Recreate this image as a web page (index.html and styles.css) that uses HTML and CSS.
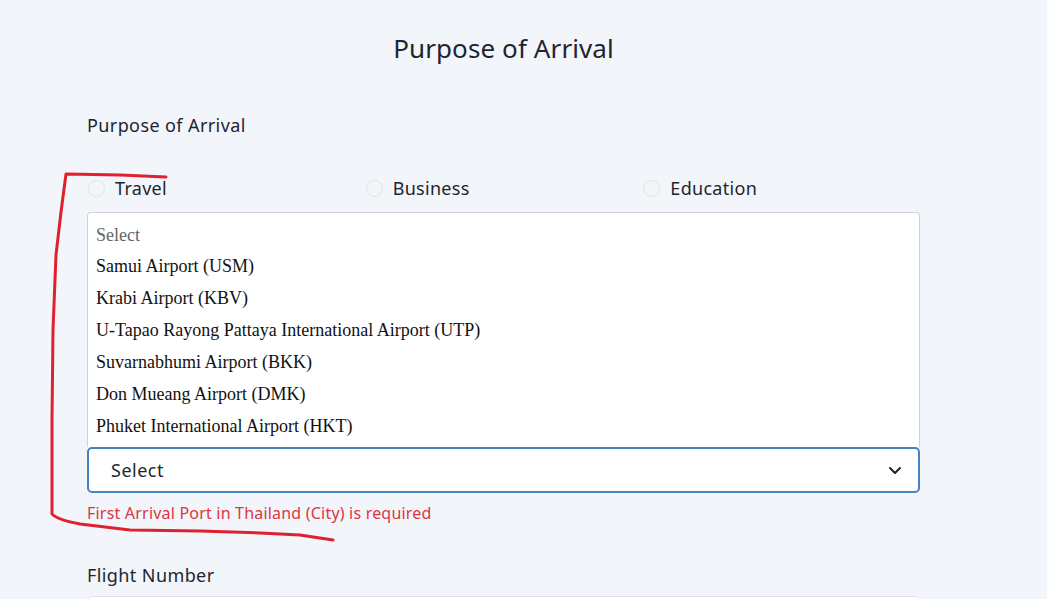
FILE: index.html
```html
<!DOCTYPE html>
<html lang="en">
<head>
    <meta charset="UTF-8">
    <meta name="viewport" content="width=device-width, initial-scale=1.0">
    <title>Purpose of Arrival</title>
    <link rel="stylesheet" href="styles.css">
</head>
<body>
    <div class="form">
        <h2 class="title">Purpose of Arrival</h2>

        <div class="label">Purpose of Arrival</div>
        <div class="radios">
            <label class="radio"><span class="dot"></span>Travel</label>
            <label class="radio"><span class="dot"></span>Business</label>
            <label class="radio"><span class="dot"></span>Education</label>
        </div>

        <div class="listbox">
            <div class="opt first">Select</div>
            <div class="opt">Samui Airport (USM)</div>
            <div class="opt">Krabi Airport (KBV)</div>
            <div class="opt">U-Tapao Rayong Pattaya International Airport (UTP)</div>
            <div class="opt">Suvarnabhumi Airport (BKK)</div>
            <div class="opt">Don Mueang Airport (DMK)</div>
            <div class="opt">Phuket International Airport (HKT)</div>
        </div>
        <div class="select">
            <span>Select</span>
            <svg width="14" height="10" viewBox="0 0 14 10"><path d="M2 3 L7 8 L12 3" fill="none" stroke="#222" stroke-width="2" stroke-linecap="round" stroke-linejoin="round"/></svg>
        </div>
        <div class="error">First Arrival Port in Thailand (City) is required</div>

        <div class="label next">Flight Number</div>
        <div class="input"></div>
    </div>

    <!-- hand-drawn mark on the screenshot -->
    <svg class="mark" width="1047" height="599" viewBox="0 0 1047 599">
        <path d="M166,177 L120,175 L66,174 L61,212 L56,255 L53,330 L52,420 L52,514 Q58,520 80,524 L130,530 L200,531 L260,533 L300,535 L333,540" fill="none" stroke="#e0202e" stroke-width="3" stroke-linecap="round" stroke-linejoin="round"/>
    </svg>
</body>
</html>
```

FILE: styles.css
```css
body {
    margin: 0;
    background-color: #f2f5f9;
    font-family: "Noto Sans", "Open Sans", sans-serif;
    color: #1f2530;
    overflow: hidden;
}
.form {
    width: 833px;
    margin-left: 87px;
    padding-top: 30px;
}
.title {
    margin: 0;
    text-align: center;
    font-size: 26px;
    font-weight: 400;
    line-height: 36px;
    letter-spacing: 0.1px;
}
.label {
    margin-top: 47px;
    font-size: 18px;
    line-height: 24px;
    letter-spacing: 0.4px;
}
.label.next {
    margin-top: 38px;
}
.radios {
    display: grid;
    grid-template-columns: repeat(3, 1fr);
    margin-top: 39px;
    height: 24px;
}
.radio {
    display: flex;
    align-items: center;
    font-size: 18px;
    line-height: 24px;
    letter-spacing: 0.3px;
}
.dot {
    width: 15px;
    height: 15px;
    border: 1px solid #dfe3e8;
    border-radius: 50%;
    background-color: #f3f5f8;
    margin-left: 1px;
    margin-right: 10px;
}
.listbox {
    margin-top: 12px;
    background-color: #fff;
    border: 1px solid #cfd3d8;
    border-bottom: none;
    border-radius: 4px 4px 0 0;
    padding: 9px 0 5px 8px;
    font-family: "Liberation Serif", "Times New Roman", serif;
    font-size: 18px;
    color: #111;
}
.opt {
    line-height: 32px;
    height: 32px;
}
.opt.first {
    color: #666;
    height: 28px;
    line-height: 26px;
}
.select {
    height: 42px;
    border: 2px solid #4583c3;
    border-radius: 5px;
    background-color: #fff;
    display: flex;
    align-items: center;
    justify-content: space-between;
    padding: 0 16px 0 22px;
    font-size: 18px;
    letter-spacing: 0.5px;
}
.error {
    margin-top: 8px;
    color: #dc3545;
    font-size: 16px;
    line-height: 24px;
    letter-spacing: 0.2px;
}
.input {
    margin-top: 9px;
    height: 40px;
    border: 1px solid #dfe3e8;
    border-radius: 5px;
    background-color: #fff;
}
.mark {
    position: absolute;
    left: 0;
    top: 0;
    pointer-events: none;
}
```
